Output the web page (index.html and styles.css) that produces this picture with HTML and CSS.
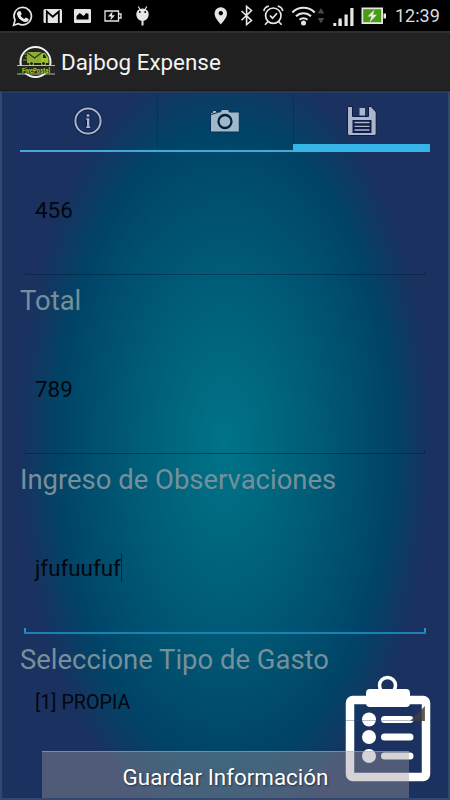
FILE: index.html
```
<!DOCTYPE html>
<html lang="es">
<head>
    <meta charset="UTF-8">
    <meta name="viewport" content="width=device-width, initial-scale=1.0">
    <title>Dajbog Expense</title>
    <link rel="stylesheet" href="styles.css">
</head>
<body>

<div class="status-bar">
    <svg class="status-icons" width="150" height="31" viewBox="0 0 150 31" fill="#e6e6e6">
        <!-- WhatsApp -->
        <path d="M13.6 25.2l1.400-5A8.700 8.700 0 1 1 18.400 23.700z" fill="none" stroke="#e6e6e6" stroke-width="1.700"/>
        <path d="M18.600 11.300l1.700-.4 1.500 3.200-1.200 1.500c.9 1.700 2 2.700 3.700 3.400l1.400-1.500 3 1.500c.1 1.800-1.400 3.100-3.300 3-4.400-.7-8.300-4.700-8.400-8.300 0-1 .7-1.900 1.600-2.400z"/>
        <!-- Gmail -->
        <rect x="43.500" y="9" width="18.500" height="14" rx="1.500"/>
        <path d="M46.800 23V11.500l6 5.200 6-5.200V23" fill="none" stroke="#000" stroke-width="1.800"/>
        <!-- Gallery -->
        <path d="M75 9h15a1 1 0 0 1 1 1v12a1 1 0 0 1-1 1H75a1 1 0 0 1-1-1V10a1 1 0 0 1 1-1zM76.500 19.500h12V14l-2.300-1-2.500 3-4-3-3.200 3z" fill-rule="evenodd"/>
        <!-- Battery charging -->
        <path d="M105 11h13.500v10H105zM119 14h2v4h-2" fill="none" stroke="#e6e6e6" stroke-width="1.300"/>
        <path d="M112.500 11.500l-4.500 5h3.200l-1 4 4.800-5.300h-3z"/>
        <!-- Android -->
        <path d="M136.300 14a6.200 5.500 0 0 1 12.400 0c0 4-2.600 7-6.200 7s-6.200-3-6.200-7z"/>
        <path d="M138.300 6.500l2 3.500M146.700 6.500l-2 3.500" stroke="#e6e6e6" stroke-width="1.200"/>
        <path d="M142.500 20v5.500" stroke="#e6e6e6" stroke-width="2"/>
        <circle cx="139.800" cy="12" r=".9" fill="#000"/>
        <circle cx="145.200" cy="12" r=".9" fill="#000"/>
    </svg>
    <svg class="status-icons" width="180" height="31" viewBox="210 0 180 31" fill="#e6e6e6">
        <!-- Location -->
        <path d="M220.800 7.200a6 6 0 0 1 6.200 6c0 4.500-3.600 8-6.200 11.300-2.600-3.300-6.200-6.800-6.200-11.300a6 6 0 0 1 6.200-6zm0 3.800a2.200 2.200 0 1 0 .01 0z" fill-rule="evenodd"/>
        <!-- Bluetooth -->
        <path d="M241.500 11l10 9.500-4.900 4V6.500l4.900 4-10 9.700" fill="none" stroke="#e6e6e6" stroke-width="1.600"/>
        <!-- Alarm -->
        <g fill="none" stroke="#e6e6e6" stroke-width="1.700">
            <circle cx="273.300" cy="15.700" r="7.700"/>
            <path d="M270 15.500l2.500 2.700 4.500-5M263.800 11c.5-2.500 2.300-4.300 5-5M282.800 11c-.5-2.500-2.300-4.300-5-5M268 21.500l-3 3.300M278.600 21.500l3 3.300"/>
        </g>
        <!-- Wifi -->
        <g fill="none" stroke="#e6e6e6" stroke-width="2">
            <path d="M292.300 12.500a15.500 15.500 0 0 1 22.400 0M296 16.300a10.500 10.500 0 0 1 15 0M299.500 19.800a5.700 5.700 0 0 1 8 0"/>
        </g>
        <circle cx="303.500" cy="23" r="2.500"/>
        <path d="M321 8l3.300 5.500h-6.600zM321 23.500l3.300-5.500h-6.600z" fill="#484848"/>
        <!-- Signal -->
        <path d="M333.300 23h3v3h-3zM338.600 20.500h3V26h-3zM344.500 14.500h3.200V26h-3.200zM350.300 8h3.200v18h-3.200z"/>
        <path d="M338.600 18.500h3V26h-3z"/>
        <!-- Battery -->
        <path d="M361.500 7.500h21.500v16.500h-21.500zM383.500 13.500h2.500v5h-2.500z"/>
        <path d="M363.200 9.200h18v13h-18z" fill="#479d12"/>
        <path d="M374.500 9.500l-7 7h4l-2 6 7.500-7.700h-4z"/>
    </svg>
    <span class="clock">12:39</span>
</div>

<div class="action-bar">
    <svg class="app-logo" width="38" height="34" viewBox="0 0 38 34">
        <circle cx="18.500" cy="17" r="15" fill="#20241c" stroke="#f2f2f2" stroke-width="2"/>
        <path d="M10 7h15v11H10z" fill="#8aad32"/>
        <path d="M24 8h4l3.500 5v5H24z" fill="#9bc232"/>
        <path d="M10 7.500l7.500 5.500L25 7.500" fill="none" stroke="#2b3a12" stroke-width="1.200"/>
        <path d="M26 9.500h1.800l1.700 3.500H26z" fill="#1c2411"/>
        <path d="M7 9h4M8 12h3M6 15h5" stroke="#7f9f2f" stroke-width="1.200"/>
        <circle cx="14.500" cy="18.500" r="2" fill="#222" stroke="#a8cc3c"/>
        <circle cx="26.500" cy="18.500" r="2" fill="#222" stroke="#a8cc3c"/>
        <path d="M0 20.500h38v8H0z" fill="#24281f"/>
        <path d="M0 20.500h38M0 29h38" stroke="#dadada" stroke-width=".8"/>
        <text class="logo-text" x="5" y="27.500" textLength="28" lengthAdjust="spacingAndGlyphs">FivePostal</text>
    </svg>
    <h1>Dajbog Expense</h1>
</div>

<div class="content">
    <div class="tabs">
        <div class="tab">
            <svg width="30" height="30" viewBox="0 0 30 30">
                <g fill="none" stroke="#0b1c42" stroke-width="3.500">
                    <circle cx="15" cy="15" r="12.600"/>
                    <path d="M15 7.500v3.500M15 12V22.500" stroke-width="5"/>
                </g>
                <circle cx="15" cy="15" r="12.600" fill="none" stroke="#a9b5cb" stroke-width="2"/>
                <path d="M13.600 8.300h2.800v2.400h-2.800zM13.200 12.300h3.200v8.200h.8V22h-4v-1.500h.8v-6.800h-.8z" fill="#a9b5cb"/>
            </svg>
        </div>
        <div class="tab">
            <svg width="30" height="30" viewBox="0 0 30 30">
                <path d="M.5 6.500h2V4.500h4v1.500h4l1-2.500h7l1 2.500h9.800v20H.5z" fill="#9fb9c9" stroke="#08305a" stroke-width="1"/>
                <path d="M1 8.500l7-2" stroke="#08305a" stroke-width="1"/>
                <circle cx="15" cy="15.500" r="6.500" fill="#9fb9c9" stroke="#03213f" stroke-width="2.300"/>
            </svg>
        </div>
        <div class="tab active">
            <svg width="30" height="30" viewBox="0 0 30 30">
                <path d="M1.500.5h4v10h16V.5h2.500l5.200 5.500v21.500a2 2 0 0 1-2 2H2.500a2 2 0 0 1-2-2V1.500z" fill="#adb5cb" stroke="#0b1b41"/>
                <path d="M12.500 2H18v7.500h-5.500z" fill="#adb5cb"/>
                <path d="M5.500 14h19v13h-19z" fill="#0f1d4a"/>
                <path d="M7.500 16.500h15M7.500 20.300h15M7.500 24h15" stroke="#adb5cb" stroke-width="1.300"/>
            </svg>
        </div>
    </div>

    <div class="field first">456</div>
    <div class="label">Total</div>
    <div class="field">789</div>
    <div class="label">Ingreso de Observaciones</div>
    <div class="field focused">jfufuufuf<span class="cursor"></span></div>
    <div class="label">Seleccione Tipo de Gasto</div>
    <div class="spinner">[1] PROPIA</div>

    <svg class="clipboard" width="86" height="108" viewBox="0 0 86 108">
        <rect x="5" y="25" width="76" height="77" rx="3" fill="none" stroke="#fff" stroke-width="8.500"/>
        <circle cx="42.500" cy="10.500" r="8" fill="none" stroke="#fff" stroke-width="3.500"/>
        <rect x="21" y="14" width="44" height="18" rx="4" fill="#fff"/>
        <g fill="#fff">
            <circle cx="24" cy="44.500" r="7"/>
            <circle cx="24" cy="62" r="7"/>
            <circle cx="24" cy="81" r="7"/>
        </g>
        <path d="M39.500 44.500h25.500M39.500 62h25.500M39.500 81h25.500" stroke="#fff" stroke-width="7" stroke-linecap="round"/>
        <path d="M0 45.500h66" stroke="#344564" stroke-opacity=".35"/>
        <path d="M80 31v15H65z" fill="#3d3d42" fill-opacity=".85"/>
        <path d="M79.500 32v14" stroke="#77665d"/>
    </svg>

    <div class="save-button">Guardar Información</div>
</div>

</body>
</html>
```

FILE: styles.css
```
* {
    box-sizing: border-box;
}

body {
    font-family: Roboto, sans-serif;
    margin: 0;
    height: 800px;
    overflow: hidden;
    background-color: #000;
    color: #fff;
}

.status-bar {
    display: flex;
    align-items: center;
    height: 31px;
    background-color: #000;
}

.status-icons + .status-icons {
    margin-left: 60px;
}

.clock {
    margin-left: 5px;
    font-size: 18px;
    color: #dcdcdc;
}

.action-bar {
    display: flex;
    align-items: center;
    height: 60px;
    padding: 0 17px;
    background-color: #222;
    border-top: 2px solid #303030;
    border-bottom: 1px solid #191919;
}

.app-logo {
    margin-top: 1px;
    overflow: visible;
}

.logo-text {
    font-size: 7.5px;
    font-weight: bold;
    fill: #a6cf31;
}

h1 {
    margin: 0 0 0 6px;
    font-size: 22.4px;
    font-weight: normal;
    color: #f3f3f3;
}

.content {
    position: relative;
    height: 709px;
    padding: 0 18px;
    background: radial-gradient(ellipse 208px 395px at 223px 352px, #007489 0%, #005d77 42%, #004467 80%, #1b315f 100%);
    border: 2px solid #304972;
    border-top-color: #23395f;
}

.tabs {
    display: grid;
    grid-template-columns: repeat(3, 1fr);
    height: 59px;
}

.tab {
    display: flex;
    justify-content: center;
    padding-top: 13px;
    border-bottom: 2px solid #45a7dc;
}

.tab + .tab {
    box-shadow: inset 1px 0 rgba(0, 30, 70, 0.3);
}

.tab.active {
    border-bottom: 8px solid #36b4e5;
}

.field {
    position: relative;
    display: flex;
    align-items: center;
    height: 133px;
    margin: 0 5px;
    padding: 3px 10px 0;
    font-size: 22.4px;
    color: #03070f;
    border-bottom: 1px solid rgba(0, 25, 55, 0.5);
}

/* small upturned ends of the input underline */
.field::after {
    content: "";
    position: absolute;
    left: 0;
    right: 0;
    bottom: 0;
    height: 3px;
    border: solid rgba(0, 25, 55, 0.4);
    border-width: 0 1px;
}

.field.first {
    height: 123px;
    padding: 0 10px 7px;
}

.field.focused {
    height: 134px;
    margin: 0 4px;
    padding: 3px 11px 0;
    border-bottom: 2px solid #1682b8;
}

.field.focused::after {
    height: 4px;
    border-color: #2591c8;
    border-width: 0 2px;
}

.cursor {
    width: 1px;
    height: 29px;
    background-color: #092737;
}

.label {
    height: 46px;
    line-height: 52px;
    font-size: 27.45px;
    color: #76909b;
    white-space: nowrap;
}

.spinner {
    height: 46px;
    padding-left: 15px;
    line-height: 46px;
    font-size: 19.7px;
    color: #03070f;
}

.clipboard {
    position: absolute;
    left: 343px;
    top: 582px;
}

.save-button {
    position: relative;
    height: 47px;
    margin: 25px 21px 0 22px;
    font-size: 22.4px;
    line-height: 50px;
    text-align: center;
    color: #fff;
    text-shadow: 1px 1px 2px rgba(0, 0, 0, 0.5);
    background-color: rgba(155, 150, 155, 0.42);
    border-top: 1px solid rgba(160, 190, 210, 0.5);
}
```
